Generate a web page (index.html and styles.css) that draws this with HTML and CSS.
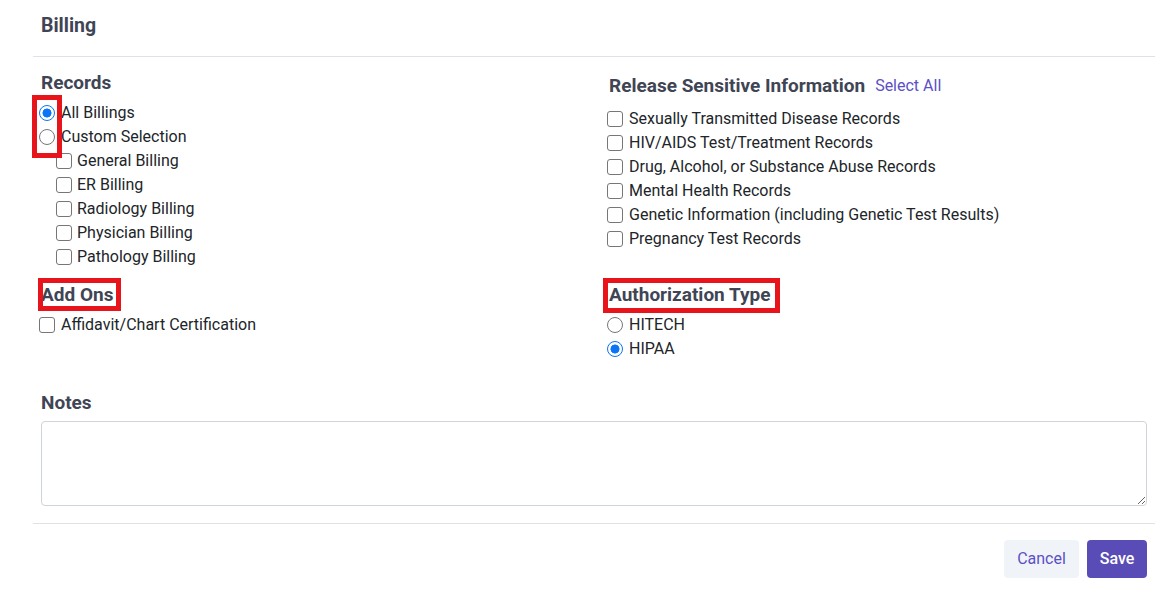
FILE: index.html
```html
<!DOCTYPE html>
<html lang="en">
<head>
<meta charset="utf-8">
<title>Billing</title>
<link rel="stylesheet" href="styles.css">
</head>
<body>
<div class="modal">
  <div class="modal-header">
    <h1 class="title">Billing</h1>
  </div>
  <div class="modal-body">
    <div class="grid">
      <div class="cell">
        <h2 class="sec-title">Records</h2>
        <div class="list">
          <span class="mark mark-radios"></span>
          <label class="opt"><input type="radio" name="rec" checked><span>All Billings</span></label>
          <label class="opt"><input type="radio" name="rec"><span>Custom Selection</span></label>
          <label class="opt sub"><input type="checkbox"><span>General Billing</span></label>
          <label class="opt sub"><input type="checkbox"><span>ER Billing</span></label>
          <label class="opt sub"><input type="checkbox"><span>Radiology Billing</span></label>
          <label class="opt sub"><input type="checkbox"><span>Physician Billing</span></label>
          <label class="opt sub"><input type="checkbox"><span>Pathology Billing</span></label>
        </div>
      </div>
      <div class="cell">
        <div class="sec-head">
          <h2 class="sec-title">Release Sensitive Information</h2>
          <button class="link-btn" type="button">Select All</button>
        </div>
        <div class="list">
          <label class="opt"><input type="checkbox"><span>Sexually Transmitted Disease Records</span></label>
          <label class="opt"><input type="checkbox"><span>HIV/AIDS Test/Treatment Records</span></label>
          <label class="opt"><input type="checkbox"><span>Drug, Alcohol, or Substance Abuse Records</span></label>
          <label class="opt"><input type="checkbox"><span>Mental Health Records</span></label>
          <label class="opt"><input type="checkbox"><span>Genetic Information (including Genetic Test Results)</span></label>
          <label class="opt"><input type="checkbox"><span>Pregnancy Test Records</span></label>
        </div>
      </div>
      <div class="cell">
        <h2 class="sec-title marked"><span class="mark mark-addons"></span>Add Ons</h2>
        <div class="list">
          <label class="opt"><input type="checkbox"><span>Affidavit/Chart Certification</span></label>
        </div>
      </div>
      <div class="cell">
        <h2 class="sec-title marked"><span class="mark mark-auth"></span>Authorization Type</h2>
        <div class="list">
          <label class="opt"><input type="radio" name="auth"><span>HITECH</span></label>
          <label class="opt"><input type="radio" name="auth" checked><span>HIPAA</span></label>
        </div>
      </div>
    </div>
    <div class="notes">
      <h2 class="sec-title notes-title">Notes</h2>
      <textarea class="notes-input"></textarea>
    </div>
  </div>
  <div class="modal-footer">
    <button class="btn btn-cancel" type="button">Cancel</button>
    <button class="btn btn-save" type="button">Save</button>
  </div>
</div>
</body>
</html>
```
FILE: styles.css
```css
* { box-sizing: border-box; }
html, body { background: #ffffff; }
body {
  margin: 0;
  font-family: Roboto, "Liberation Sans", Arial, sans-serif;
  font-size: 16px;
  color: #212529;
}
.modal {
  margin-left: 33px;
  width: 1122px;
}
.modal-header {
  height: 57px;
  padding: 12px 8px 0 8px;
  border-bottom: 1px solid #dee2e6;
}
.title {
  margin: 0;
  font-size: 19.5px;
  line-height: 27px;
  font-weight: 700;
  color: #3f4554;
}
.modal-body {
  padding: 12px 8px 17px 8px;
}
.grid {
  display: grid;
  grid-template-columns: 1fr 1fr;
  column-gap: 30px;
  row-gap: 12px;
}
.sec-title {
  margin: 0 0 5px 0;
  font-size: 19px;
  line-height: 27px;
  font-weight: 700;
  color: #3f4554;
}
.sec-head {
  display: flex;
  align-items: center;
  height: 33px;
  margin-bottom: 5px;
}
.sec-head .sec-title { margin: 0; }
.link-btn {
  margin-left: 10px;
  padding: 0;
  border: 0;
  background: none;
  font-family: inherit;
  font-size: 16px;
  line-height: 24px;
  color: #5b50c6;
  cursor: pointer;
}
.list {
  position: relative;
}
.opt {
  display: flex;
  align-items: center;
  gap: 6px;
  height: 24px;
  line-height: 24px;
}
.opt input {
  appearance: none;
  -webkit-appearance: none;
  width: 16px;
  height: 16px;
  margin: 0 0 0 -2px;
  flex: none;
  border: 1px solid #767676;
  background: #ffffff;
}
.opt input[type="checkbox"] {
  border-radius: 3px;
}
.opt input[type="radio"] {
  border-radius: 50%;
}
.opt input[type="radio"]:checked {
  border: 1.5px solid #0b75f5;
  background: radial-gradient(circle, #0b75f5 0 4.2px, #ffffff 4.8px);
}
.opt.sub input {
  margin-left: 15px;
  margin-right: -1px;
}
.marked {
  position: relative;
}
.mark {
  position: absolute;
  border: 5px solid #e8141c;
  pointer-events: none;
}
.mark-radios {
  left: -9px;
  top: -6px;
  width: 30px;
  height: 63px;
}
.mark-addons {
  left: -3px;
  top: -3px;
  width: 83px;
  height: 33px;
}
.mark-auth {
  left: -6px;
  top: -3px;
  width: 177px;
  height: 35px;
}
.notes {
  margin-top: 28px;
}
.notes-title {
  margin-bottom: 5px;
}
.notes-input {
  display: block;
  width: 100%;
  height: 85px;
  border: 1px solid #ced4da;
  border-radius: 4px;
  font-family: inherit;
  font-size: 16px;
  padding: 6px 12px;
  resize: vertical;
}
.modal-footer {
  display: flex;
  justify-content: flex-end;
  gap: 8px;
  border-top: 1px solid #dee2e6;
  padding: 16px 8px;
}
.btn {
  height: 38px;
  padding: 0 12px;
  border: 0;
  border-radius: 4px;
  font-family: inherit;
  font-size: 16px;
  line-height: 36px;
  cursor: pointer;
}
.btn-cancel {
  background: #f0f4f9;
  color: #5b50c6;
  width: 75px;
}
.btn-save {
  background: #5a4cb6;
  color: #ffffff;
  font-weight: 500;
  width: 60px;
}
```
